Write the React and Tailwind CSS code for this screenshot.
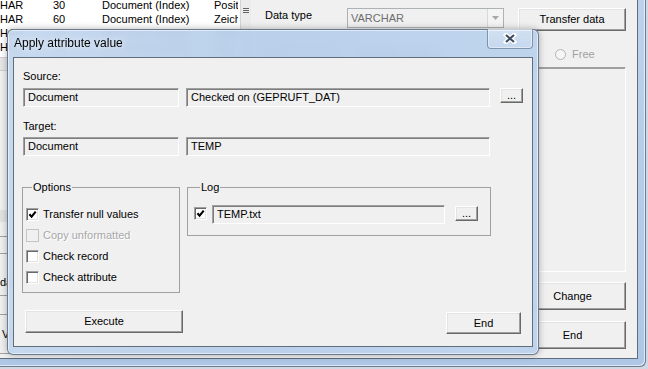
import React from 'react';

const raised =
  'bg-[#f0f0f0] border border-t-white border-l-white border-r-[#696969] border-b-[#696969] shadow-[inset_-1px_-1px_0_#a0a0a0,inset_1px_1px_0_#e3e3e3]';
const sunken =
  'bg-[#f0f0f0] border border-t-[#a0a0a0] border-l-[#a0a0a0] border-r-white border-b-white shadow-[inset_1px_1px_0_#7d7d7d]';

const Field = ({ className = '', children }) => (
  <div className={`${sunken} h-[19px] pl-[4px] flex items-center leading-[17px] whitespace-nowrap overflow-hidden ${className}`}>
    {children}
  </div>
);

const Dots = ({ className = '' }) => (
  <button className={`${raised} w-[23px] h-[15px] flex items-end justify-center leading-[12px] pb-[1px] ${className}`}>...</button>
);

const Check = ({ checked, disabled }) => (
  <span
    className={`w-[13px] h-[13px] shrink-0 flex items-center justify-center border ${
      disabled
        ? 'border-[#c4c4c4] bg-[#f0f0f0]'
        : 'bg-white border-t-[#a0a0a0] border-l-[#a0a0a0] border-r-white border-b-white shadow-[inset_1px_1px_0_#696969,inset_-1px_-1px_0_#e3e3e3]'
    }`}
  >
    {checked && (
      <svg width="9" height="9" viewBox="0 0 9 9">
        <path d="M1.4 4.2 L3.6 6.6 L7.7 1.7" fill="none" stroke="#000" strokeWidth="2.1" />
      </svg>
    )}
  </span>
);

const Option = ({ label, checked, disabled }) => (
  <label className="flex items-center gap-[4px] h-[13px]">
    <Check checked={checked} disabled={disabled} />
    <span className={disabled ? 'text-[#a8a8a8] [text-shadow:1px_1px_0_#fff]' : ''}>{label}</span>
  </label>
);

const Radio = ({ label }) => (
  <span className="flex items-center gap-[6px] text-[#a0a0a0]">
    <span className="w-[11px] h-[11px] rounded-full border border-[#b4b4b4] bg-[#f6f6f6]" />
    {label}
  </span>
);

const rows = [
  ['HAR', '30', 'Document (Index)', 'Position'],
  ['HAR', '60', 'Document (Index)', 'Zeichen'],
  ['HAR', '20', 'Document (Index)', 'Status'],
  ['HAR', '10', 'Document (Index)', 'Typ'],
  ['HAR', '40', 'Document (Index)', 'Name'],
];

function BackgroundWindow() {
  return (
    <div className="w-[646px] h-[367px] rounded-br-[6px] border-r border-b border-[#6c7c90] bg-gradient-to-b from-[#bcd2ec] to-[#aec7e6] pr-[7px] pb-[7px] shadow-[inset_-1px_-1px_0_rgba(255,255,255,0.6)]">
      <div className="w-[638px] h-[359px] border-r border-b border-[#5f6d7d] bg-[#f0f0f0] flex">
        {/* left: field list */}
        <div className="w-[251px] flex flex-col">
          <div className="h-[57px] flex">
            <div className="w-[240px] bg-white overflow-hidden -mt-[2px]">
              {rows.map((r, i) => (
                <div key={i} className="h-[14px] flex items-center whitespace-nowrap">
                  <span className="w-[53px]">{r[0]}</span>
                  <span className="w-[49px]">{r[1]}</span>
                  <span className="w-[112px]">{r[2]}</span>
                  <span className="w-[24px] overflow-hidden">{r[3]}</span>
                </div>
              ))}
            </div>
            <div className="w-[11px] bg-[#ebebeb] border-l border-[#d4d4d4] pt-[5px]">
              <div className="h-[10px] flex flex-col items-center justify-center gap-[1px]">
                <span className="w-[6px] h-px bg-[#666]" />
                <span className="w-[6px] h-px bg-[#666]" />
                <span className="w-[6px] h-px bg-[#666]" />
              </div>
            </div>
          </div>
          <div className="h-[14px] bg-[#e6e6e6] border-y border-[#d0d0d0]" />
          <div className="h-[139px]" />
          <div className="h-[12px] bg-[#e2e2e2]" />
          <div className="h-[15px] border-b border-[#a0a0a0]" />
          <div className="h-[17px] border-b border-[#a0a0a0]" />
          <div className="h-[42px] border-b border-[#a0a0a0] flex items-center pt-[16px]">dat</div>
          <div className="h-[19px] border-b border-[#a0a0a0]" />
          <div className="h-[39px] border-b border-[#a0a0a0] flex items-center pl-[2px]">View</div>
        </div>

        {/* right: attribute settings */}
        <div className="flex-1 flex flex-col pl-[14px] pr-[11px] pt-[8px]">
          <div className="flex items-start">
            <span className="w-[82px] leading-[15px]">Data type</span>
            <div className="w-[157px] h-[20px] border border-[#adb2b5] bg-[#f0f0f0] flex items-center">
              <span className="flex-1 pl-[3px] text-[#6d6d6d]">VARCHAR</span>
              <span className="w-[16px] h-[18px] border-l border-[#d9d9d9] bg-[#f4f4f4] flex items-center justify-center">
                <svg width="7" height="4" viewBox="0 0 7 4">
                  <path d="M0 0 H7 L3.5 4 Z" fill="#a8a8a8" />
                </svg>
              </span>
            </div>
            <button className={`${raised} ml-[14px] w-[108px] h-[23px]`}>Transfer data</button>
          </div>
          <div className="mt-[17px] flex items-center h-[13px]">
            <Radio label="Fixed value" />
            <span className="ml-[22px] text-[#606060] font-bold">Variable values</span>
            <span className="ml-[52px]">
              <Radio label="List" />
            </span>
            <span className="ml-auto w-[71px]">
              <Radio label="Free" />
            </span>
          </div>
          <div className="mt-[6px] h-[205px] border border-t-[#a0a0a0] border-l-[#a0a0a0] border-r-white border-b-white shadow-[inset_1px_1px_0_#a0a0a0]" />
          <button className={`${raised} mt-[10px] ml-auto w-[107px] h-[28px]`}>Change</button>
          <button className={`${raised} mt-[11px] ml-auto w-[107px] h-[28px]`}>End</button>
        </div>
      </div>
    </div>
  );
}

function ApplyDialog() {
  return (
    <div className="absolute left-[7px] top-[29px] w-[532px] h-[326px] rounded-[6px] border border-[#566579]/80 bg-gradient-to-r from-[#c3d7ee]/95 via-[#b7cde9]/95 to-[#bcd2ec]/95 backdrop-blur-[4px] shadow-[inset_0_0_0_1px_rgba(255,255,255,0.55),0_0_7px_rgba(0,0,0,0.3)] flex flex-col">
      {/* title bar */}
      <div className="h-[27px] flex items-start">
        <span className="mt-[5px] ml-[6px] text-[12px] leading-[16px] text-black [text-shadow:0_0_6px_rgba(255,255,255,0.9)]">
          Apply attribute value
        </span>
        <button className="ml-auto mr-[5px] -mt-px w-[46px] h-[20px] rounded-b-[4px] border border-t-0 border-[#6f8199]/80 bg-gradient-to-b from-white/30 to-white/10 shadow-[inset_0_0_0_1px_rgba(255,255,255,0.45)] flex items-center justify-center">
          <svg width="14" height="11" viewBox="0 0 14 11">
            <path d="M3 2 L11 9 M11 2 L3 9" stroke="#fff" strokeWidth="4.4" strokeLinecap="square" />
            <path d="M3 2 L11 9 M11 2 L3 9" stroke="#3e4a5a" strokeWidth="2.1" />
          </svg>
        </button>
      </div>

      {/* client area */}
      <div className="mx-[5px] h-[290px] border border-[#5f6d7d] bg-[#f0f0f0] flex flex-col pl-[8px]">
        <div className="mt-[11px] ml-px leading-[15px]">Source:</div>
        <div className="mt-[4px] ml-px flex items-start">
          <Field className="w-[156px]">Document</Field>
          <Field className="w-[304px] ml-[7px]">Checked on (GEPRUFT_DAT)</Field>
          <Dots className="ml-[10px]" />
        </div>

        <div className="mt-[12px] ml-px leading-[15px]">Target:</div>
        <div className="mt-[3px] ml-px flex items-start">
          <Field className="w-[156px]">Document</Field>
          <Field className="w-[304px] ml-[7px]">TEMP</Field>
        </div>

        <div className="mt-[24px] flex items-start">
          <fieldset className="w-[158px] border border-[#a0a0a0] pl-[3px] pt-[13px] pb-[8px] flex flex-col gap-[8px]">
            <legend className="ml-[6px] px-px leading-[15px]">Options</legend>
            <Option label="Transfer null values" checked />
            <Option label="Copy unformatted" disabled />
            <Option label="Check record" />
            <Option label="Check attribute" />
          </fieldset>

          <fieldset className="ml-[7px] w-[304px] border border-[#a0a0a0] pl-[6px] pt-[10px] pb-[11px]">
            <legend className="ml-[6px] px-px leading-[15px]">Log</legend>
            <div className="flex items-start">
              <span className="mt-[2px]">
                <Check checked />
              </span>
              <Field className="ml-[5px] w-[233px]">TEMP.txt</Field>
              <Dots className="ml-[10px] mt-px" />
            </div>
          </fieldset>
        </div>

        <div className="mt-[17px] flex items-start justify-between pr-[11px]">
          <button className={`${raised} ml-[3px] w-[158px] h-[23px]`}>Execute</button>
          <button className={`${raised} mt-[2px] w-[75px] h-[22px]`}>End</button>
        </div>
      </div>
    </div>
  );
}

export default function App() {
  return (
    <div className="relative w-[648px] h-[369px] overflow-hidden bg-[#cfd8e3] font-['Liberation_Sans',Arial,sans-serif] text-[11px] text-black">
      <BackgroundWindow />
      <ApplyDialog />
    </div>
  );
}
